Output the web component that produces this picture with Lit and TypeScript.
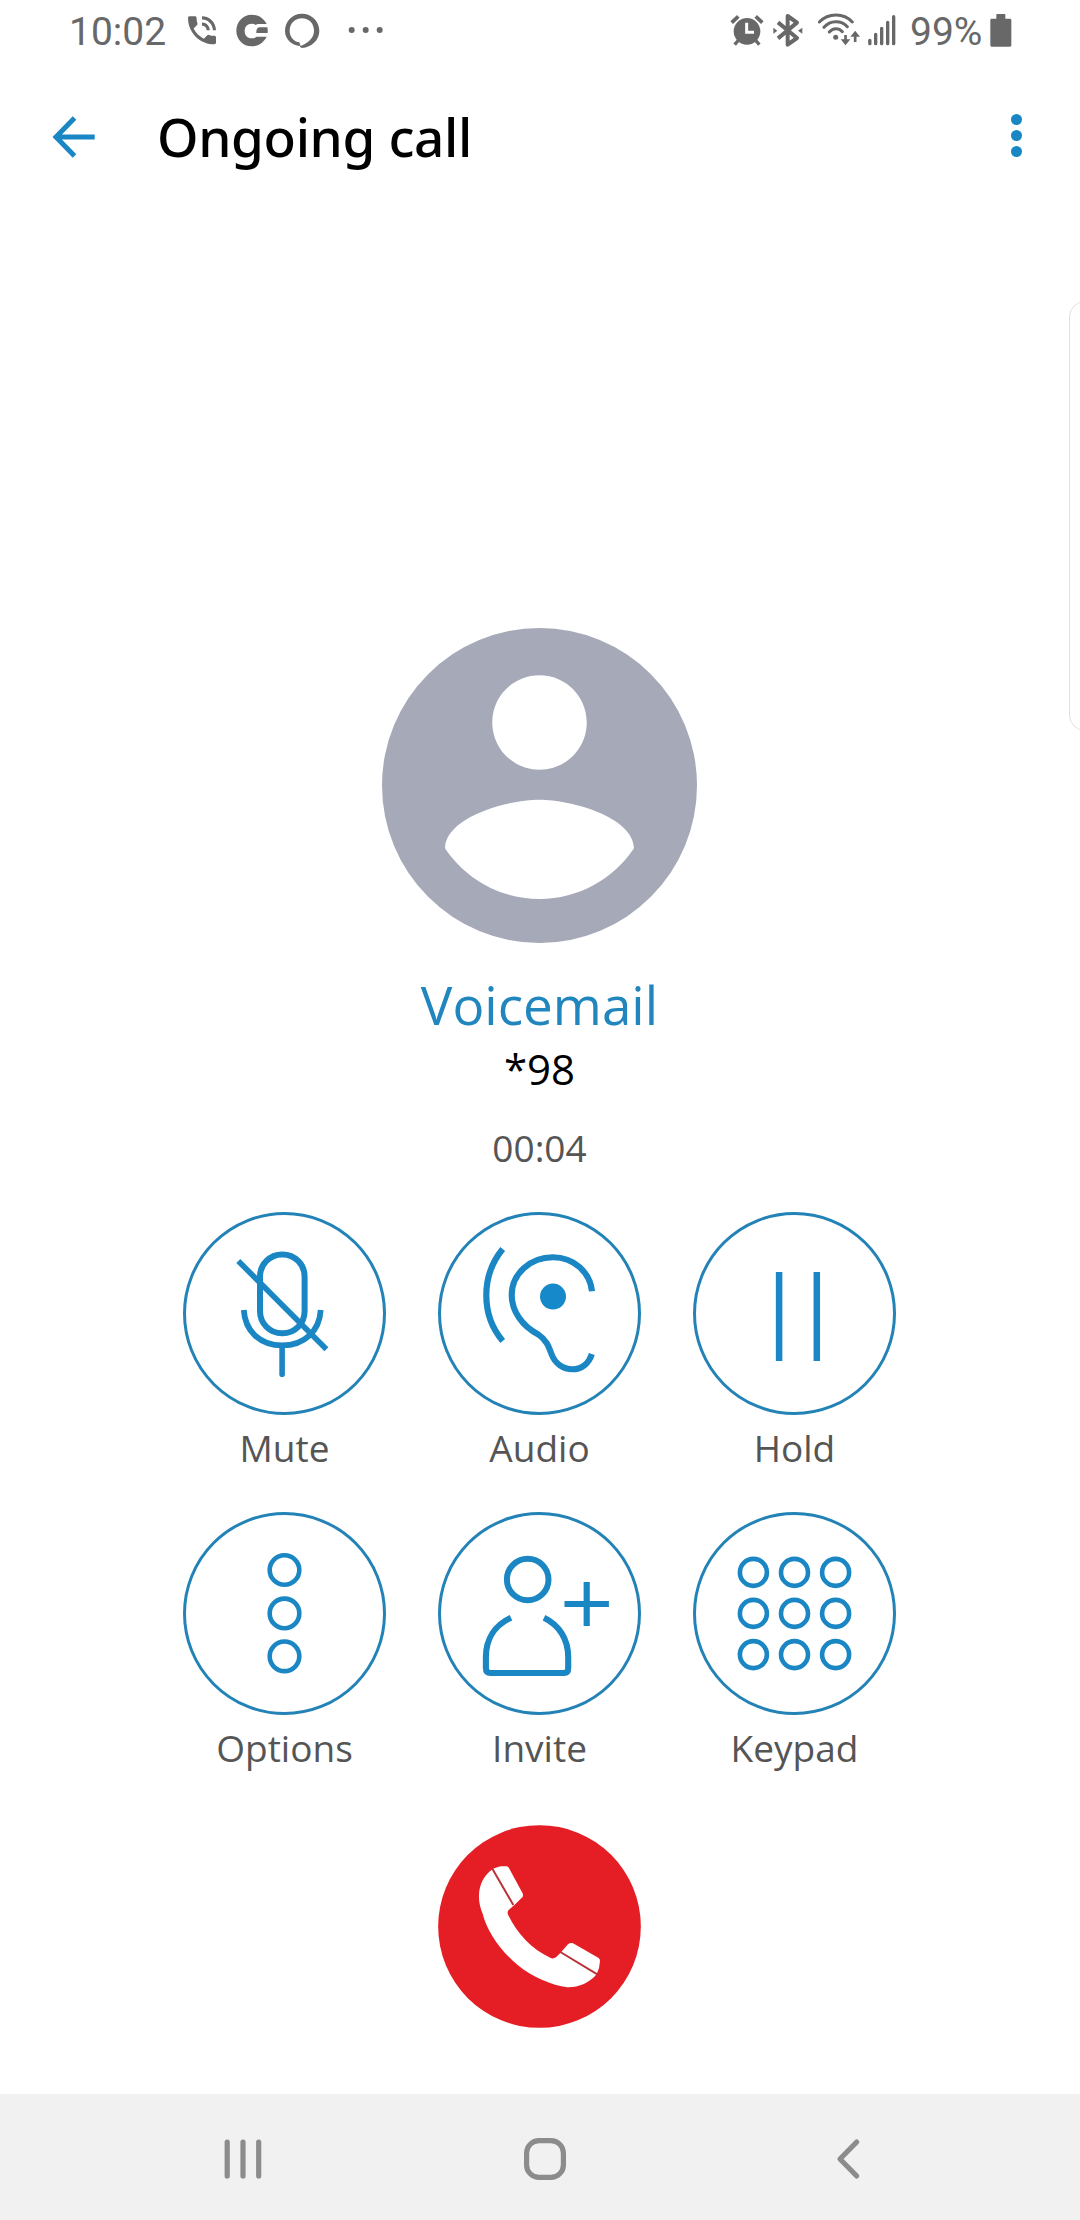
import { LitElement, html, css, svg } from "lit";
import { customElement, property } from "lit/decorators.js";

type Action = { label: string; icon: unknown };

const mute = svg`
  <rect x="77" y="42.5" width="44.6" height="78.8" rx="22" stroke-width="6" />
  <path d="M60.8 98 C62 119 77 133.3 99.2 133.3 S136.5 119 137.7 98" stroke-width="5.8" />
  <path d="M99.1 134 V162.3" stroke-width="5.6" stroke-linecap="round" />
  <path d="M55.3 49 L143.4 137.3" stroke-width="5.6" />`;

const audio = svg`
  <path d="M64.7 37 Q48.3 57 48.3 83.3 T64.7 129" stroke-width="6.2" />
  <path d="M154 79.3 C152 60 135.5 45.3 115 45.3 C92 45.3 73.7 62 73.7 83 C73.7 99 84 114 100.3 122.5 C108 127.5 110.5 134 113.7 142.5 C117 151.5 125 157.3 134.5 157.3 C144 157.3 151 151 153.8 142" stroke-width="6.1" />
  <circle class="solid" cx="115" cy="84.6" r="13" />`;

const hold = svg`<path d="M86.1 60 V149 M123.8 60 V149" stroke-width="6.5" />`;

const options = svg`${[58, 101.4, 144.3].map(
  (y) => svg`<circle cx="101.5" cy=${y} r="14.8" stroke-width="4.6" />`
)}`;

const invite = svg`
  <circle cx="89.7" cy="67.5" r="20.8" stroke-width="6" />
  <path d="M73 105.7 C57 113 47.9 127 47.9 145 V156 Q47.9 161 52.5 161 H126 Q130.2 161 130.2 156 V145 C130.2 127 121 113 106 105.7" stroke-width="6.1" />
  <path d="M126.5 92 H170.9 M148.7 70 V114" stroke-width="6.2" />`;

const keypad = svg`${[60.4, 101.4, 142.6].map((y) =>
  [60.4, 101.5, 142.6].map(
    (x) => svg`<circle cx=${x} cy=${y} r="13.5" stroke-width="4.6" />`
  )
)}`;

@customElement("call-action")
class CallAction extends LitElement {
  @property() label = "";
  @property({ attribute: false }) icon: unknown;

  static styles = css`
    :host {
      display: flex;
      flex-direction: column;
      align-items: center;
    }
    .icon {
      display: block;
      width: 203px;
      height: 203px;
      fill: none;
      stroke: #1a87c4;
    }
    .ring {
      stroke: #2382b6;
      stroke-width: 3;
    }
    .solid {
      fill: #1589ca;
      stroke: none;
    }
    .label {
      margin-top: 8px;
      font-size: 37px;
      line-height: 50px;
      color: #555;
      white-space: nowrap;
    }
  `;

  render() {
    return html`
      <svg class="icon" viewBox="0 0 203 203">
        <circle class="ring" cx="101.5" cy="101.5" r="100" />
        ${this.icon}
      </svg>
      <span class="label">${this.label}</span>
    `;
  }
}

@customElement("status-bar")
class StatusBar extends LitElement {
  static styles = css`
    :host {
      display: flex;
      height: 70px;
      box-sizing: border-box;
      padding: 0 68px 0 69px;
      color: #686868;
      font-family: Roboto, sans-serif;
      font-size: 39px;
      line-height: 65px;
    }
    svg {
      display: block;
      height: 70px;
      fill: #686868;
      flex: none;
    }
    .line {
      fill: none;
      stroke: #686868;
    }
    .cut {
      fill: none;
      stroke: #fff;
    }
    .time {
      width: 119px;
    }
    .group {
      display: flex;
    }
    .right {
      margin-left: auto;
    }
    .phone { width: 28px; margin-right: 20px; }
    .badge { width: 32px; margin-right: 17px; }
    .loop { width: 35px; margin-right: 28px; }
    .more { width: 36px; }
    .alarm { width: 34px; margin-right: 9px; }
    .bt { width: 30px; margin-right: 15px; }
    .wifi { width: 43px; margin-right: 7px; }
    .signal { width: 28px; margin-right: 14px; }
    .percent { width: 80px; }
    .battery { width: 22px; }
  `;

  render() {
    return html`
      <div class="group">
        <span class="time">10:02</span>
        <svg class="phone" viewBox="444 0 84 210">
          <path transform="translate(430 35) scale(4.667)" d="M20 15.5c-1.25 0-2.45-.2-3.57-.57-.35-.11-.74-.03-1.02.24l-2.2 2.2c-2.83-1.44-5.15-3.75-6.59-6.59l2.2-2.21c.28-.26.36-.65.25-1C8.7 6.45 8.5 5.25 8.5 4c0-.55-.45-1-1-1H4c-.55 0-1 .45-1 1 0 9.39 7.61 17 17 17 .55 0 1-.45 1-1v-3.5c0-.55-.45-1-1-1zM19 12h2c0-4.97-4.03-9-9-9v2c3.87 0 7 3.13 7 7zm-4 0h2c0-2.76-2.24-5-5-5v2c1.66 0 3 1.34 3 3z" />
        </svg>
        <svg class="badge" viewBox="588 0 96 210">
          <path d="M680 72 C671 54 654 44 635 44 C609 44 589 65 589 92 C589 118 609 139 635 139 C654 139 671 128 680 110 H650 Q644 115 635 115 C622 115 614 106 614 93 C614 80 622 71 635 71 Q643 71 647 75 Q650 72 656 72 Z" />
          <path d="M657 82 H682 Q684 90 683 99 H649 Q648 86 657 82 Z" />
        </svg>
        <svg class="loop" viewBox="735 0 105 210">
          <path fill-rule="evenodd" d="M786 41 C815 41 838 64 838 93 C838 120 815 142 786 144 L780 141 V138 C754 136 735 117 735 93 C735 64 757 41 786 41 Z M786 55 C765 55 749 71 749 92 C749 111 762 125 778 127 L782 138 C800 130 822 117 822 92 C822 71 807 55 786 55 Z" />
        </svg>
        <svg class="more" viewBox="925 0 108 210">
          <circle cx="936" cy="90" r="9" />
          <circle cx="978" cy="90" r="9" />
          <circle cx="1020" cy="90" r="9" />
        </svg>
      </div>
      <div class="group right">
        <svg class="alarm" viewBox="90 0 102 210">
          <circle cx="141" cy="94" r="40" />
          <path class="line" stroke-width="11" d="M95 68 L115 49 M187 68 L167 49" />
          <path class="line" stroke-width="10" d="M116 120 L104 134 M166 120 L178 134" />
          <path class="cut" stroke-width="9" d="M140 68 V97 H162" />
        </svg>
        <svg class="bt" viewBox="218 0 90 210">
          <path class="line" stroke-width="12" stroke-linejoin="round" d="M233 67 L290 114 L262 134 V48 L290 68 L233 115" />
          <path d="M219 83 L231 92 L219 101 Z M306 83 L293 92 L306 101 Z" />
        </svg>
        <svg class="wifi" viewBox="353 0 129 210">
          <path class="line" stroke-width="9" stroke-linecap="round" d="M357 66 C384 38 430 38 456 66 M371 82 C390 60 422 60 441 80 M387 96 C398 83 415 83 426 95" />
          <circle cx="406" cy="112" r="7.5" />
          <path class="line" stroke-width="8" d="M435.5 105 V126 M464.5 126 V103" />
          <path d="M421 118 H450 L435.5 136 Z M450 110 H479 L464.5 92 Z" />
        </svg>
        <svg class="signal" viewBox="503 0 84 210">
          <path class="line" stroke-width="10" stroke-linecap="round" d="M508.5 121 V131 M526 103 V131 M544 85 V131 M562 67 V131 M580 50 V131" />
        </svg>
        <span class="percent">99%</span>
        <svg class="battery" viewBox="869 0 66 210">
          <path d="M888 44 Q888 42 890 42 H913 Q915 42 915 44 V56 H929 Q933 56 933 60 V136 Q933 140 929 140 H874 Q870 140 870 136 V60 Q870 56 874 56 H888 Z" />
        </svg>
      </div>
    `;
  }
}

@customElement("app-root")
class AppRoot extends LitElement {
  static styles = css`
    :host {
      display: flex;
      flex-direction: column;
      position: relative;
      width: 1080px;
      height: 2220px;
      overflow: hidden;
      background: #fff;
      font-family: "Open Sans", "Noto Sans", sans-serif;
    }
    .header {
      display: flex;
      align-items: center;
      height: 133px;
      flex: none;
      box-sizing: border-box;
      padding: 0 57px 0 52px;
    }
    .back {
      width: 44px;
      height: 44px;
      fill: none;
      stroke: #1a87c4;
      stroke-width: 5;
    }
    .title {
      flex: 1;
      margin: 0 0 0 61px;
      font-family: "Noto Sans", "Open Sans", sans-serif;
      font-size: 53px;
      line-height: 72px;
      font-weight: 500;
      letter-spacing: -0.35px;
      color: #000;
    }
    .menu {
      width: 13px;
      height: 46px;
      margin-bottom: 1px;
      fill: #1a87c4;
    }
    .edge {
      position: absolute;
      left: 1069px;
      top: 301px;
      width: 40px;
      height: 430px;
      box-sizing: border-box;
      border: 1.5px solid #e1e1e1;
      border-radius: 16px;
    }
    .call {
      flex: 1;
      display: flex;
      flex-direction: column;
      align-items: center;
      padding: 425px 1px 0 0;
    }
    .avatar {
      display: block;
      width: 315px;
      height: 315px;
      flex: none;
      fill: #a5a9b8;
    }
    .name {
      margin-top: 26px;
      font-size: 53px;
      line-height: 72px;
      color: #2186bd;
    }
    .number {
      font-size: 42px;
      line-height: 55px;
      color: #000;
    }
    .timer {
      margin-top: 27px;
      font-size: 37px;
      line-height: 50px;
      color: #555;
    }
    .actions {
      display: grid;
      grid-template-columns: repeat(3, 203px);
      gap: 39px 52px;
      margin-top: 39px;
    }
    .hangup {
      display: block;
      width: 203px;
      height: 203px;
      margin-top: 52px;
      flex: none;
    }
    .disc {
      fill: #e51e25;
    }
    .handset {
      fill: #fff;
    }
    .seam {
      fill: none;
      stroke: #b8333a;
      stroke-width: 6;
    }
    .nav {
      display: flex;
      align-items: center;
      flex: none;
      height: 126px;
      box-sizing: border-box;
      padding: 4px 219px 0 223px;
      justify-content: space-between;
      background: #f1f1f1;
    }
    .nav svg {
      display: block;
      height: 42px;
      fill: none;
      stroke: #8c8c8c;
      stroke-width: 5.2;
      stroke-linecap: round;
      stroke-linejoin: round;
    }
    .recents {
      width: 40px;
    }
    .home {
      width: 42px;
      margin-right: 9px;
    }
    .previous {
      width: 25px;
    }
  `;

  private actions: Action[] = [
    { label: "Mute", icon: mute },
    { label: "Audio", icon: audio },
    { label: "Hold", icon: hold },
    { label: "Options", icon: options },
    { label: "Invite", icon: invite },
    { label: "Keypad", icon: keypad },
  ];

  render() {
    return html`
      <status-bar></status-bar>
      <header class="header">
        <svg class="back" viewBox="0 0 44 44">
          <path d="M22.5 3 L4 22 L22.5 41 M3.5 22 H42.7" />
        </svg>
        <h1 class="title">Ongoing call</h1>
        <svg class="menu" viewBox="0 0 13 46">
          <circle cx="6.5" cy="6.5" r="5.5" />
          <circle cx="6.5" cy="22.5" r="5.5" />
          <circle cx="6.5" cy="38.5" r="5.5" />
        </svg>
      </header>
      <main class="call">
        <svg class="avatar" viewBox="2 2 20 20">
          <path fill-rule="evenodd" d="M12 2a10 10 0 1 0 0 20a10 10 0 1 0 0-20zM12 5c1.66 0 3 1.34 3 3s-1.34 3-3 3-3-1.34-3-3 1.34-3 3-3zm0 14.2c-2.5 0-4.71-1.28-6-3.22.03-1.99 4-3.08 6-3.08 1.99 0 5.97 1.09 6 3.08-1.29 1.94-3.5 3.22-6 3.22z" />
        </svg>
        <div class="name">Voicemail</div>
        <div class="number">*98</div>
        <div class="timer">00:04</div>
        <div class="actions">
          ${this.actions.map(
            (a) => html`<call-action .label=${a.label} .icon=${a.icon}></call-action>`
          )}
        </div>
        <svg class="hangup" viewBox="24 29 609 609">
          <circle class="disc" cx="328.5" cy="333.5" r="304" />
          <path class="handset" d="M188 161 C205 152 220 152 231 153 Q235 154 238 160 L277 232 Q281 240 277 246 L254 268 L236 284 Q230 290 235 300 C262 355 305 402 362 428 Q370 431 378 426 L393 411 L414 387 Q421 381 429 384 L506 428 Q510 431 510 437 Q509 460 500 477 C478 503 445 517 412 516 C365 508 310 488 262 448 C210 405 170 345 158 295 C143 260 143 225 158 195 Q168 176 188 161 Z" />
          <path class="seam" d="M187 160 L250 269 M391 410 L502 477" />
        </svg>
      </main>
      <div class="edge"></div>
      <nav class="nav">
        <svg class="recents" viewBox="0 0 40 42">
          <path d="M4.2 4 V38 M20 4 V38 M35.7 4 V38" />
        </svg>
        <svg class="home" viewBox="0 0 42 42">
          <rect x="2.6" y="2.6" width="36.8" height="36.8" rx="12.5" />
        </svg>
        <svg class="previous" viewBox="0 0 25 42">
          <path d="M20.7 4 L4 21 L20.7 38" />
        </svg>
      </nav>
    `;
  }
}
